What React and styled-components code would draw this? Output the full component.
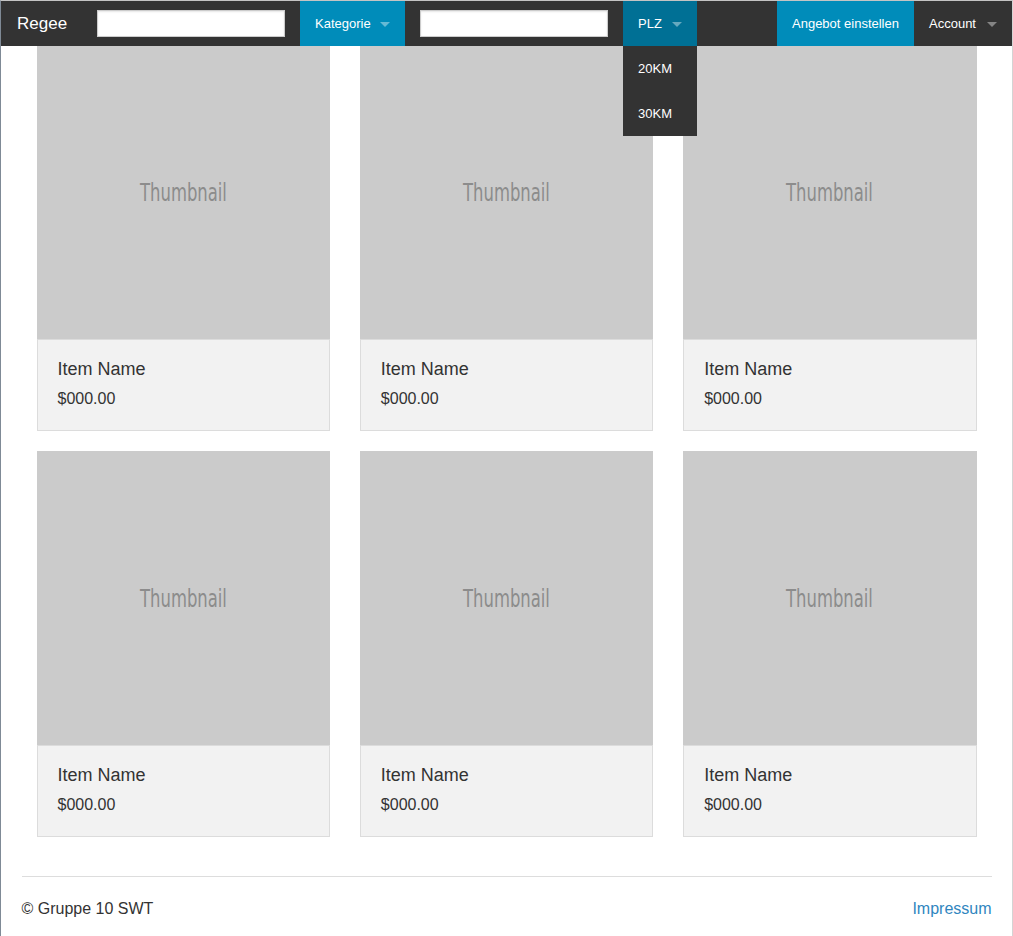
import React from "react";
import styled, { createGlobalStyle } from "styled-components";

const GlobalStyle = createGlobalStyle`
  html, body {
    margin: 0;
    padding: 0;
    background: #fff;
    font-family: "Liberation Sans", Arial, sans-serif;
    color: #333;
  }
  * {
    box-sizing: border-box;
  }
`;

const Page = styled.div`
  min-height: 100vh;
  border-top: 1px solid #c4c4c4;
  border-left: 1px solid #7f8a96;
  border-right: 1px solid #d4d4d4;
`;

const TopBar = styled.nav`
  display: flex;
  align-items: stretch;
  height: 45px;
  background: #333;
  position: relative;
  z-index: 10;
`;

const Title = styled.div`
  width: 81px;
  padding-left: 16px;
  display: flex;
  align-items: center;
  color: #fff;
  font-size: 17px;
`;

const SearchCell = styled.div`
  display: flex;
  align-items: center;
  padding: 0 15px;
`;

const SearchInput = styled.input`
  width: 188px;
  height: 27px;
  margin: 0;
  border: 1px solid #ccc;
  background: #fff;
  box-shadow: inset 0 1px 2px rgba(0, 0, 0, 0.1);
  font-family: inherit;
`;

const NavItem = styled.div`
  position: relative;
  display: flex;
  align-items: center;
  width: ${(p) => p.$width}px;
  padding: 0 15px;
  background: ${(p) => p.$bg || "#333"};
  color: #fff;
  font-size: 13px;
  white-space: nowrap;
  cursor: pointer;

  ${(p) =>
    p.$arrow &&
    `
    &::after {
      content: "";
      position: absolute;
      right: 15px;
      top: 50%;
      margin-top: -2px;
      border: 5px solid transparent;
      border-top-color: rgba(255, 255, 255, 0.4);
      border-bottom: 0;
    }
  `}
`;

const Spacer = styled.div`
  flex: 1;
`;

const Dropdown = styled.ul`
  position: absolute;
  top: 45px;
  left: 0;
  width: 100%;
  margin: 0;
  padding: 0;
  list-style: none;
  background: #333;
`;

const DropdownItem = styled.li`
  height: 45px;
  line-height: 45px;
  padding: 0 15px;
  color: #fff;
  font-size: 13px;
`;

const Container = styled.main`
  max-width: 970px;
  margin: 0 auto;
`;

const Grid = styled.div`
  display: grid;
  grid-template-columns: repeat(3, 1fr);
  column-gap: 30px;
  row-gap: 20px;
  padding: 0 15px;
`;

const Card = styled.div`
  display: flex;
  flex-direction: column;
`;

const Thumb = styled.div`
  aspect-ratio: 1 / 1;
  background: #cbcbcb;
  display: flex;
  align-items: center;
  justify-content: center;
  color: #8c8c8c;
  overflow: hidden;
`;

const ThumbLabel = styled.span`
  display: inline-block;
  font-family: "DejaVu Sans Condensed", "DejaVu Sans", sans-serif;
  font-size: 25px;
  font-weight: 400;
  line-height: 1;
  transform: scaleX(0.73);
`;

const Caption = styled.div`
  background: #f2f2f2;
  border: 1px solid #dcdcdc;
  padding: 18px 20px 20px;
`;

const ItemName = styled.div`
  font-size: 18px;
  line-height: 22px;
  color: #333;
`;

const Price = styled.div`
  margin-top: 8px;
  font-size: 16px;
  line-height: 22px;
  color: #333;
`;

const Footer = styled.footer`
  margin-top: 39px;
  border-top: 1px solid #ddd;
  padding: 20px 0 6px;
  display: flex;
  justify-content: space-between;
  font-size: 16px;
  line-height: 24px;
`;

const FooterLink = styled.a`
  color: #2f86c0;
  text-decoration: none;
`;

const items = Array.from({ length: 6 }, (_, i) => ({
  id: i,
  name: "Item Name",
  price: "$000.00",
}));

export default function App() {
  return (
    <>
      <GlobalStyle />
      <Page>
        <TopBar>
          <Title>Regee</Title>
          <SearchCell>
            <SearchInput type="text" />
          </SearchCell>
          <NavItem $width={105} $bg="#008cba" $arrow>
            Kategorie
          </NavItem>
          <SearchCell>
            <SearchInput type="text" />
          </SearchCell>
          <NavItem $width={74} $bg="#007095" $arrow>
            PLZ
            <Dropdown>
              <DropdownItem>20KM</DropdownItem>
              <DropdownItem>30KM</DropdownItem>
            </Dropdown>
          </NavItem>
          <Spacer />
          <NavItem $width={137} $bg="#008cba">
            Angebot einstellen
          </NavItem>
          <NavItem $width={98} $arrow>
            Account
          </NavItem>
        </TopBar>

        <Container>
          <Grid>
            {items.map((item) => (
              <Card key={item.id}>
                <Thumb>
                  <ThumbLabel>Thumbnail</ThumbLabel>
                </Thumb>
                <Caption>
                  <ItemName>{item.name}</ItemName>
                  <Price>{item.price}</Price>
                </Caption>
              </Card>
            ))}
          </Grid>
          <Footer>
            <span>© Gruppe 10 SWT</span>
            <FooterLink href="#">Impressum</FooterLink>
          </Footer>
        </Container>
      </Page>
    </>
  );
}
